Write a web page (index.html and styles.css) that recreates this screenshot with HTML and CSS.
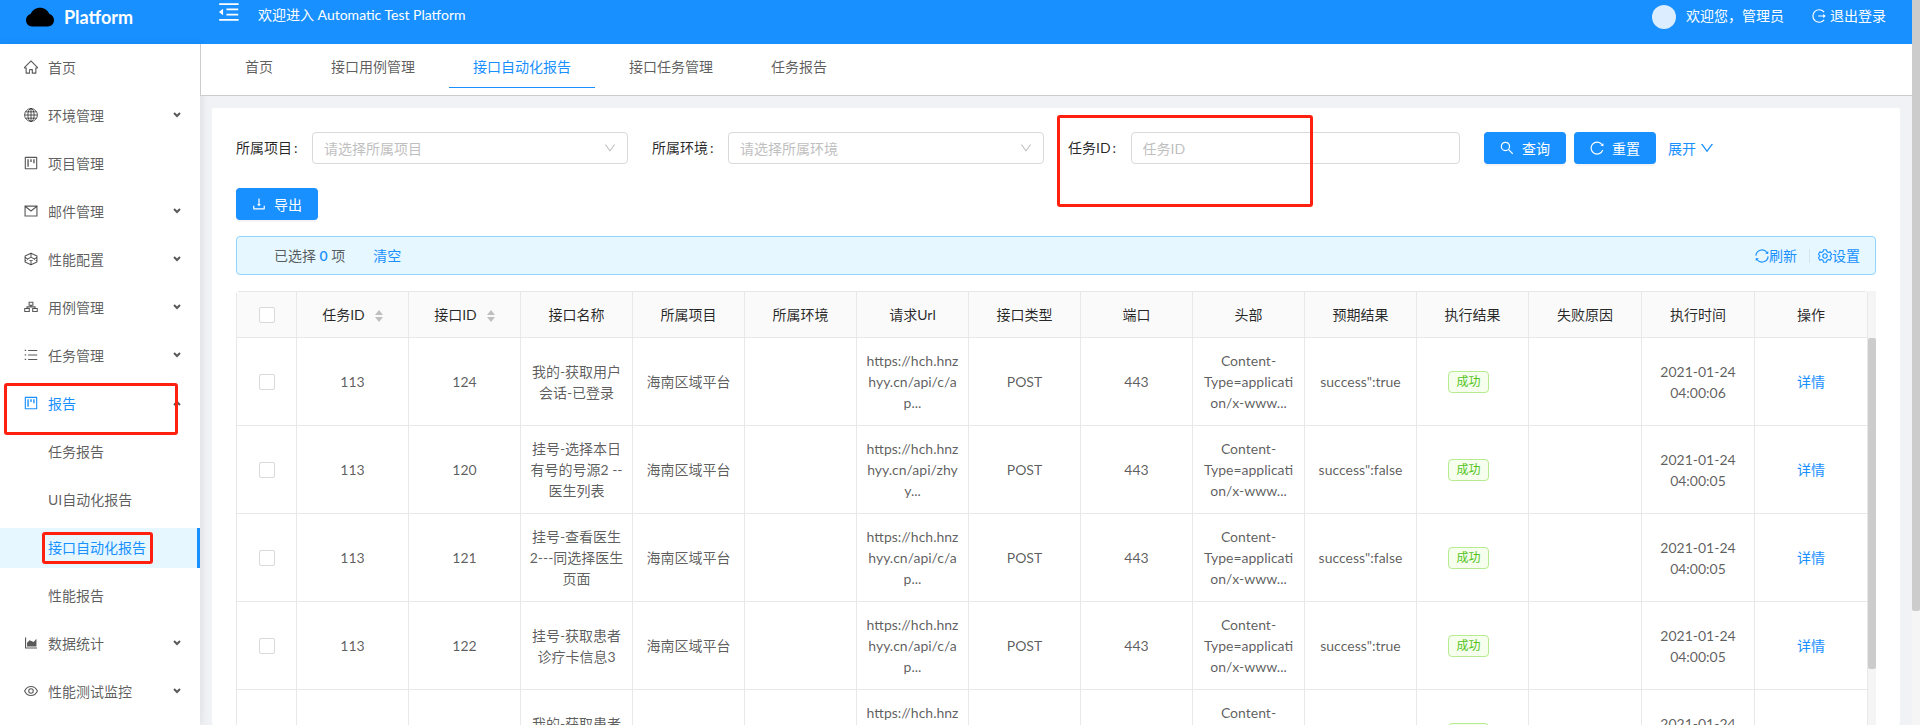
FILE: index.html
```html
<!DOCTYPE html>
<html lang="zh-CN">
<head>
    <meta charset="UTF-8">
    <meta name="viewport" content="width=device-width, initial-scale=1.0">
    <title>接口自动化报告</title>
    <link rel="stylesheet" href="styles.css">
</head>
<body>
    <svg class="sprite" aria-hidden="true">
        <symbol id="cloud" viewBox="64 64 896 896"><path d="M811.4 418.7C765.6 297.9 648.9 212 512.2 212S258.8 297.8 213 418.6C127.3 441.1 64 519.1 64 612c0 110.5 89.5 200 199.9 200h496.2C870.5 812 960 722.5 960 612c0-92.7-63.1-170.7-148.6-193.3z"/></symbol>
        <symbol id="fold" viewBox="64 64 896 896"><path d="M408 442h480v-72H408zM408 654h480v-72H408zM112 232h792v-72H112zM112 864h792v-72H112zM115 519l142 112c6 5 14 1 14-6V399c0-7-8-11-14-6L115 505c-5 4-5 10 0 14z"/></symbol>
        <symbol id="home" viewBox="64 64 896 896"><path d="M946.5 505L534.6 93.4a31.9 31.9 0 0 0-45.2 0L77.5 505c-12 12-18.8 28.3-18.8 45.3 0 35.3 28.7 64 64 64h43.4V908c0 17.700 14.300 32 32 32H448V716h112v224h265.900c17.700 0 32-14.300 32-32V614.300h43.400c17 0 33.300-6.700 45.300-18.800 24.900-25 24.900-65.500-.1-90.500zM785.900 542.300V868H632V676c0-18-14-32-32-32H424c-18 0-32 14-32 32v192H238.100V542.300h-96l370-369.700 370 369.700z"/></symbol>
        <symbol id="globe" viewBox="64 64 896 896"><g fill="none" stroke="currentColor" stroke-width="62"><circle cx="512" cy="512" r="410"/><ellipse cx="512" cy="512" rx="200" ry="410"/><path d="M512 102v820M102 512h820M160 310h704M160 714h704"/></g></symbol>
        <symbol id="project" viewBox="64 64 896 896"><path d="M880 112H144c-18 0-32 14-32 32v736c0 18 14 32 32 32h736c18 0 32-14 32-32V144c0-18-14-32-32-32zm-40 728H184V184h656zM280 752h88V264h-88zM656 520h88V264h-88zM468 440h88V264h-88z"/></symbol>
        <symbol id="mail" viewBox="64 64 896 896"><g fill="none" stroke="currentColor" stroke-width="72"><path d="M132 196h760v632H132z"/><path d="M150 220l362 290 362-290"/></g></symbol>
        <symbol id="codepen" viewBox="64 64 896 896"><g fill="none" stroke="currentColor" stroke-width="66" stroke-linejoin="round"><path d="M512 144l380 176v384L512 880 132 704V320z"/><path d="M132 420l380 210 380-210M132 604l380-210 380 210M512 144v250M512 630v250"/></g></symbol>
        <symbol id="cluster" viewBox="64 64 896 896"><g fill="none" stroke="currentColor" stroke-width="70"><path d="M392 212h240v190H392zM112 612h290v190H112zM622 612h290v190H622z"/><path d="M512 402v100M257 612V502h510v110"/></g></symbol>
        <symbol id="bars" viewBox="64 64 896 896"><path d="M912 192H328v64h584zM912 480H328v64h584zM912 768H328v64h584zM112 180h88v80h-88zM112 468h88v80h-88zM112 756h88v80h-88z"/></symbol>
        <symbol id="chart" viewBox="64 64 896 896"><path d="M888 792H200V168c0-4-4-8-8-8h-56c-4 0-8 4-8 8v688c0 4 4 8 8 8h752c4 0 8-4 8-8v-56c0-4-4-8-8-8zM260 740h600V240L680 440 420 330 260 500z"/></symbol>
        <symbol id="eye" viewBox="64 64 896 896"><g fill="none" stroke="currentColor" stroke-width="68"><path d="M100 512C190 320 330 222 512 222s322 98 412 290c-90 192-230 290-412 290S190 704 100 512z"/><circle cx="512" cy="512" r="145"/></g></symbol>
        <symbol id="arrow" viewBox="0 0 8 6"><path d="M1 1l3 3 3-3" fill="none" stroke="currentColor" stroke-width="2"/></symbol>
        <symbol id="down" viewBox="64 64 896 896"><path d="M884 256h-75c-5.100 0-9.900 2.500-12.900 6.600L512 654.200 227.900 262.600c-3-4.100-7.800-6.600-12.900-6.600h-75c-6.500 0-10.300 7.400-6.500 12.700l352.600 486.100c12.800 17.600 39 17.600 51.700 0l352.600-486.100c3.900-5.300.1-12.700-6.400-12.700z"/></symbol>
        <symbol id="search" viewBox="64 64 896 896"><g fill="none" stroke="currentColor" stroke-width="76"><circle cx="412" cy="412" r="262"/><path d="M600 600l283 283"/></g></symbol>
        <symbol id="reload" viewBox="64 64 896 896"><path d="M880 640A382 382 0 1 1 820 280" fill="none" stroke="currentColor" stroke-width="76"/><path d="M922 205v195l-200-48z"/></symbol>
        <symbol id="download" viewBox="64 64 896 896"><path d="M505.700 661a8 8 0 0 0 12.600 0l112-141.700c4.100-5.200.4-12.900-6.300-12.900h-74.100V168c0-4.400-3.600-8-8-8h-60c-4.400 0-8 3.600-8 8v338.300H400c-6.700 0-10.400 7.700-6.300 12.900l112 141.800zM878 626h-60c-4.400 0-8 3.600-8 8v154H214V634c0-4.400-3.600-8-8-8h-60c-4.400 0-8 3.600-8 8v198c0 17.700 14.300 32 32 32h684c17.700 0 32-14.300 32-32V634c0-4.400-3.600-8-8-8z"/></symbol>
        <symbol id="sync" viewBox="64 64 896 896"><g fill="none" stroke="currentColor" stroke-width="74"><path d="M120 490A392 392 0 0 1 830 290M904 534A392 392 0 0 1 194 734"/></g><path d="M912 190v200l-200-44zM112 834V634l200 44z"/></symbol>
        <symbol id="gear" viewBox="64 64 896 896"><g fill="none" stroke="currentColor" stroke-width="70" stroke-linejoin="round"><path d="M420 110h184l30 120 90 52 118-34 92 158-88 86v40l88 86-92 158-118-34-90 52-30 120H420l-30-120-90-52-118 34-92-158 88-86v-40l-88-86 92-158 118 34 90-52z"/><circle cx="512" cy="512" r="140"/></g></symbol>
        <symbol id="logout" viewBox="64 64 896 896"><path d="M840 270A400 400 0 1 0 840 754" fill="none" stroke="currentColor" stroke-width="76"/><path d="M460 476h320v-90l165 126-165 126v-90H460z"/></symbol>
        <symbol id="sort" viewBox="0 0 8 12"><path d="M4 0l4 5H0zM4 12l4-5H0z"/></symbol>
    </svg>

    <div class="app">
        <div class="page">
            <header class="header">
                <div class="logo"><svg class="logo-icon"><use href="#cloud"/></svg>Platform</div>
                <button class="fold" aria-label="收起菜单"><svg class="fold-icon"><use href="#fold"/></svg></button>
                <span class="welcome">欢迎进入 Automatic Test Platform</span>
                <span class="avatar"></span>
                <span class="user">欢迎您，管理员</span>
                <a class="logout" href="#"><svg class="icon"><use href="#logout"/></svg>退出登录</a>
            </header>

            <div class="body">
                <nav class="sidebar">
                    <a class="item" href="#"><svg class="icon"><use href="#home"/></svg>首页</a>
                    <a class="item" href="#"><svg class="icon"><use href="#globe"/></svg>环境管理<svg class="arrow"><use href="#arrow"/></svg></a>
                    <a class="item" href="#"><svg class="icon"><use href="#project"/></svg>项目管理</a>
                    <a class="item" href="#"><svg class="icon"><use href="#mail"/></svg>邮件管理<svg class="arrow"><use href="#arrow"/></svg></a>
                    <a class="item" href="#"><svg class="icon"><use href="#codepen"/></svg>性能配置<svg class="arrow"><use href="#arrow"/></svg></a>
                    <a class="item" href="#"><svg class="icon"><use href="#cluster"/></svg>用例管理<svg class="arrow"><use href="#arrow"/></svg></a>
                    <a class="item" href="#"><svg class="icon"><use href="#bars"/></svg>任务管理<svg class="arrow"><use href="#arrow"/></svg></a>
                    <a class="item open" href="#"><svg class="icon"><use href="#project"/></svg>报告<svg class="arrow up"><use href="#arrow"/></svg><span class="mark mark-menu"></span></a>
                    <a class="item sub" href="#">任务报告</a>
                    <a class="item sub" href="#">UI自动化报告</a>
                    <a class="item sub selected" href="#">接口自动化报告<span class="mark mark-sub"></span></a>
                    <a class="item sub" href="#">性能报告</a>
                    <a class="item" href="#"><svg class="icon"><use href="#chart"/></svg>数据统计<svg class="arrow"><use href="#arrow"/></svg></a>
                    <a class="item" href="#"><svg class="icon"><use href="#eye"/></svg>性能测试监控<svg class="arrow"><use href="#arrow"/></svg></a>
                </nav>

                <main class="main">
                    <div class="tabs">
                        <a class="tab" href="#">首页</a>
                        <a class="tab" href="#">接口用例管理</a>
                        <a class="tab active" href="#">接口自动化报告</a>
                        <a class="tab" href="#">接口任务管理</a>
                        <a class="tab" href="#">任务报告</a>
                    </div>

                    <section class="card">
                        <form class="search">
                            <div class="field">
                                <label class="label" for="project-select">所属项目</label>
                                <div class="select">
                                    <select class="control" id="project-select"><option>请选择所属项目</option></select>
                                    <svg class="caret"><use href="#down"/></svg>
                                </div>
                            </div>
                            <div class="field">
                                <label class="label" for="env-select">所属环境</label>
                                <div class="select">
                                    <select class="control" id="env-select"><option>请选择所属环境</option></select>
                                    <svg class="caret"><use href="#down"/></svg>
                                </div>
                            </div>
                            <div class="field">
                                <label class="label" for="task-id">任务ID</label>
                                <input class="control" id="task-id" type="text" placeholder="任务ID">
                                <span class="mark mark-field"></span>
                            </div>
                            <div class="field actions">
                                <button class="btn" type="button"><svg class="icon"><use href="#search"/></svg>查询</button>
                                <button class="btn" type="button"><svg class="icon"><use href="#reload"/></svg>重置</button>
                                <a class="more" href="#">展开 <svg class="icon"><use href="#down"/></svg></a>
                            </div>
                        </form>

                        <div class="toolbar">
                            <button class="btn" type="button"><svg class="icon"><use href="#download"/></svg>导出</button>
                        </div>

                        <div class="alert">
                            <span>已选择 <b class="count">0</b> 项</span>
                            <a class="clear" href="#">清空</a>
                            <a class="refresh" href="#"><svg class="icon"><use href="#sync"/></svg>刷新</a>
                            <a class="setting" href="#"><svg class="icon"><use href="#gear"/></svg>设置</a>
                        </div>

                        <div class="table-wrap">
                            <table class="table">
                                <thead>
                                    <tr>
                                        <th class="check"><input class="box" type="checkbox" aria-label="全选"></th>
                                        <th>任务ID<svg class="sort"><use href="#sort"/></svg></th>
                                        <th>接口ID<svg class="sort"><use href="#sort"/></svg></th>
                                        <th>接口名称</th>
                                        <th>所属项目</th>
                                        <th>所属环境</th>
                                        <th>请求Url</th>
                                        <th>接口类型</th>
                                        <th>端口</th>
                                        <th>头部</th>
                                        <th>预期结果</th>
                                        <th>执行结果</th>
                                        <th class="wide">失败原因</th>
                                        <th class="wide">执行时间</th>
                                        <th class="wide">操作</th>
                                    </tr>
                                </thead>
                                <tbody>
                                    <tr>
                                        <td><input class="box" type="checkbox" aria-label="选择 124"></td>
                                        <td>113</td>
                                        <td>124</td>
                                        <td>我的-获取用户<br>会话-已登录</td>
                                        <td>海南区域平台</td>
                                        <td></td>
                                        <td>https://hch.hnz<br>hyy.cn/api/c/a<br>p...</td>
                                        <td>POST</td>
                                        <td>443</td>
                                        <td>Content-<br>Type=applicati<br>on/x-www...</td>
                                        <td>success":true</td>
                                        <td><span class="tag">成功</span></td>
                                        <td></td>
                                        <td>2021-01-24<br>04:00:06</td>
                                        <td><a href="#">详情</a></td>
                                    </tr>
                                    <tr>
                                        <td><input class="box" type="checkbox" aria-label="选择 120"></td>
                                        <td>113</td>
                                        <td>120</td>
                                        <td>挂号-选择本日<br>有号的号源2 --<br>医生列表</td>
                                        <td>海南区域平台</td>
                                        <td></td>
                                        <td>https://hch.hnz<br>hyy.cn/api/zhy<br>y...</td>
                                        <td>POST</td>
                                        <td>443</td>
                                        <td>Content-<br>Type=applicati<br>on/x-www...</td>
                                        <td>success":false</td>
                                        <td><span class="tag">成功</span></td>
                                        <td></td>
                                        <td>2021-01-24<br>04:00:05</td>
                                        <td><a href="#">详情</a></td>
                                    </tr>
                                    <tr>
                                        <td><input class="box" type="checkbox" aria-label="选择 121"></td>
                                        <td>113</td>
                                        <td>121</td>
                                        <td>挂号-查看医生<br>2---同选择医生<br>页面</td>
                                        <td>海南区域平台</td>
                                        <td></td>
                                        <td>https://hch.hnz<br>hyy.cn/api/c/a<br>p...</td>
                                        <td>POST</td>
                                        <td>443</td>
                                        <td>Content-<br>Type=applicati<br>on/x-www...</td>
                                        <td>success":false</td>
                                        <td><span class="tag">成功</span></td>
                                        <td></td>
                                        <td>2021-01-24<br>04:00:05</td>
                                        <td><a href="#">详情</a></td>
                                    </tr>
                                    <tr>
                                        <td><input class="box" type="checkbox" aria-label="选择 122"></td>
                                        <td>113</td>
                                        <td>122</td>
                                        <td>挂号-获取患者<br>诊疗卡信息3</td>
                                        <td>海南区域平台</td>
                                        <td></td>
                                        <td>https://hch.hnz<br>hyy.cn/api/c/a<br>p...</td>
                                        <td>POST</td>
                                        <td>443</td>
                                        <td>Content-<br>Type=applicati<br>on/x-www...</td>
                                        <td>success":true</td>
                                        <td><span class="tag">成功</span></td>
                                        <td></td>
                                        <td>2021-01-24<br>04:00:05</td>
                                        <td><a href="#">详情</a></td>
                                    </tr>
                                    <tr>
                                        <td><input class="box" type="checkbox" aria-label="选择 123"></td>
                                        <td>113</td>
                                        <td>123</td>
                                        <td>我的-获取患者<br>信息</td>
                                        <td>海南区域平台</td>
                                        <td></td>
                                        <td>https://hch.hnz<br>hyy.cn/api/c/a<br>p...</td>
                                        <td>POST</td>
                                        <td>443</td>
                                        <td>Content-<br>Type=applicati<br>on/x-www...</td>
                                        <td>success":true</td>
                                        <td><span class="tag">成功</span></td>
                                        <td></td>
                                        <td>2021-01-24<br>04:00:05</td>
                                        <td><a href="#">详情</a></td>
                                    </tr>
                                </tbody>
                            </table>
                            <div class="table-rail"><div class="table-thumb"></div></div>
                        </div>
                    </section>
                </main>
            </div>
        </div>
        <div class="page-rail"><div class="page-thumb"></div></div>
    </div>
</body>
</html>
```

FILE: styles.css
```css
* {
    box-sizing: border-box;
}
body {
    margin: 0;
    font-family: Lato, "Noto Sans CJK SC", sans-serif;
    font-size: 14px;
    line-height: 21px;
    color: rgba(0, 0, 0, 0.65);
    background-color: #fff;
}
a {
    color: #1890ff;
    text-decoration: none;
}
svg {
    fill: currentColor;
    flex: none;
}
.sprite {
    position: absolute;
    width: 0;
    height: 0;
}
.icon {
    width: 14px;
    height: 14px;
}
.app {
    display: flex;
    height: 100vh;
    overflow: hidden;
}
.page {
    flex: 1;
    min-width: 0;
    display: flex;
    flex-direction: column;
}

/* header */
.header {
    display: flex;
    align-items: flex-start;
    height: 44px;
    flex: none;
    padding-right: 26px;
    line-height: 32px;
    color: #fff;
    background-color: #1890ff;
}
.logo {
    display: flex;
    width: 218px;
    padding-left: 26px;
    gap: 10px;
    font-size: 18px;
    font-weight: 700;
    line-height: 34px;
}
.logo-icon {
    width: 28px;
    height: 34px;
    color: #000;
}
.fold {
    width: 22px;
    height: 24px;
    padding: 0;
    border: none;
    color: #fff;
    background: none;
    cursor: pointer;
}
.fold-icon {
    display: block;
    width: 22px;
    height: 24px;
}
.welcome {
    flex: 1;
    padding-left: 18px;
    line-height: 30px;
}
.avatar {
    width: 24px;
    height: 24px;
    margin-top: 5px;
    border-radius: 50%;
    background-color: #dbedff;
}
.user {
    margin: 0 28px 0 10px;
}
.logout {
    display: flex;
    align-items: center;
    gap: 4px;
    color: #fff;
}

/* sidebar */
.body {
    flex: 1;
    min-height: 0;
    display: flex;
    background-color: #f0f2f5;
}
.sidebar {
    position: relative;
    flex: none;
    width: 200px;
    padding-top: 4px;
    background-color: #fff;
    box-shadow: 2px 0 8px rgba(0, 21, 41, 0.08);
}
.item {
    position: relative;
    display: flex;
    align-items: center;
    height: 40px;
    margin-bottom: 8px;
    padding: 0 19px 2px 24px;
    gap: 10px;
    color: rgba(0, 0, 0, 0.65);
}
.sub {
    padding-left: 48px;
}
.open {
    color: #1890ff;
}
.selected {
    color: #1890ff;
    background-color: #e6f7ff;
    border-right: 3px solid #1890ff;
}
.arrow {
    width: 8px;
    height: 6px;
    margin-left: auto;
    color: rgba(0, 0, 0, 0.65);
}
.up {
    transform: rotate(180deg);
}

/* red highlight frames */
.mark {
    position: absolute;
    z-index: 2;
    border: 3px solid #ff2010;
    border-radius: 3px;
    pointer-events: none;
}
.mark-menu {
    top: -1px;
    left: 4px;
    width: 174px;
    height: 52px;
}
.mark-sub {
    top: 4px;
    left: 42px;
    width: 111px;
    height: 32px;
}
.mark-field {
    top: -17px;
    left: -11px;
    width: 256px;
    height: 92px;
}

/* main */
.main {
    flex: 1;
    min-width: 0;
    display: flex;
    flex-direction: column;
}
.tabs {
    position: relative;
    display: flex;
    flex: none;
    height: 52px;
    padding-left: 20px;
    gap: 10px;
    background-color: #fff;
    border-left: 1px solid #ccc;
    border-bottom: 1px solid #ccc;
}
.tab {
    height: 44px;
    padding: 0 24px;
    line-height: 46px;
    color: rgba(0, 0, 0, 0.65);
}
.active {
    color: #1890ff;
    border-bottom: 1px solid #1890ff;
}
.card {
    flex: 1;
    min-height: 0;
    margin: 12px 12px 0;
    padding: 24px;
    border-radius: 2px;
    background-color: #fff;
}
.search {
    display: grid;
    grid-template-columns: repeat(4, 1fr);
    gap: 24px;
}
.field {
    position: relative;
    display: flex;
    align-items: center;
    height: 32px;
}
.label {
    padding-bottom: 1px;
    color: rgba(0, 0, 0, 0.85);
    white-space: nowrap;
}
.label::after {
    content: ":";
    display: inline-block;
    width: 18px;
    padding-left: 2px;
}
.select {
    position: relative;
    flex: 1;
}
.control {
    display: block;
    width: 100%;
    height: 32px;
    padding: 0 11px;
    border: 1px solid #d9d9d9;
    border-radius: 4px;
    font-family: inherit;
    font-size: 14px;
    color: #bfbfbf;
    background-color: #fff;
    appearance: none;
}
.control::placeholder {
    color: #bfbfbf;
}
.caret {
    position: absolute;
    top: 10px;
    right: 12px;
    width: 12px;
    height: 12px;
    color: #bfbfbf;
    pointer-events: none;
}
.actions {
    gap: 8px;
}
.btn {
    display: flex;
    align-items: center;
    justify-content: center;
    gap: 8px;
    width: 82px;
    height: 32px;
    padding: 0 0 1px;
    border: none;
    border-radius: 4px;
    font-family: inherit;
    font-size: 14px;
    color: #fff;
    background-color: #1890ff;
    box-shadow: 0 2px 0 rgba(0, 0, 0, 0.04);
    cursor: pointer;
}
.more {
    display: flex;
    align-items: center;
    gap: 4px;
    margin-left: 4px;
}
.toolbar {
    margin: 24px 0 16px;
}
.alert {
    display: flex;
    align-items: center;
    height: 39px;
    padding: 0 15px 0 37px;
    border: 1px solid #91d5ff;
    border-radius: 4px;
    background-color: #e6f7ff;
}
.count {
    font-weight: 600;
    color: #1890ff;
}
.clear {
    margin-left: 28px;
}
.refresh,
.setting {
    display: flex;
    align-items: center;
}
.refresh {
    margin-left: auto;
    padding-right: 12px;
}
.setting {
    height: 14px;
    padding-left: 8px;
    border-left: 1px solid #d5e6ee;
}

/* table */
.table-wrap {
    display: flex;
    margin-top: 16px;
}
.table {
    flex: 1;
    width: 100%;
    min-width: 0;
    table-layout: fixed;
    border-spacing: 0;
    border-top: 1px solid #e8e8e8;
    border-left: 1px solid #e8e8e8;
    border-radius: 4px 4px 0 0;
    text-align: center;
}
.table th,
.table td {
    padding: 0 4px;
    border-right: 1px solid #e8e8e8;
    border-bottom: 1px solid #e8e8e8;
    white-space: nowrap;
}
.table th {
    width: 112px;
    height: 46px;
    font-weight: 400;
    color: rgba(0, 0, 0, 0.85);
    background-color: #fafafa;
}
.table td {
    height: 88px;
}
.table .check {
    width: 60px;
}
.table .wide {
    width: auto;
}
.box {
    display: block;
    width: 16px;
    height: 16px;
    margin: 0 auto;
    border: 1px solid #d9d9d9;
    border-radius: 2px;
    background-color: #fff;
    appearance: none;
}
.sort {
    width: 8px;
    height: 12px;
    margin-left: 10px;
    color: #bfbfbf;
    vertical-align: -2px;
}
.tag {
    display: inline-block;
    height: 22px;
    margin-right: 8px;
    padding: 0 7px;
    border: 1px solid #b7eb8f;
    border-radius: 4px;
    font-size: 12px;
    line-height: 20px;
    color: #52c41a;
    background-color: #f6ffed;
}
.table-rail {
    flex: none;
    width: 8px;
    padding-top: 47px;
    background-color: #f5f5f5;
}
.table-thumb {
    height: 331px;
    border-radius: 2px;
    background-color: #ccc;
}
.page-rail {
    flex: none;
    width: 8px;
    background-color: #f5f5f5;
}
.page-thumb {
    height: 84.3%;
    border-radius: 0 0 2px 2px;
    background-color: #ccc;
}
```
